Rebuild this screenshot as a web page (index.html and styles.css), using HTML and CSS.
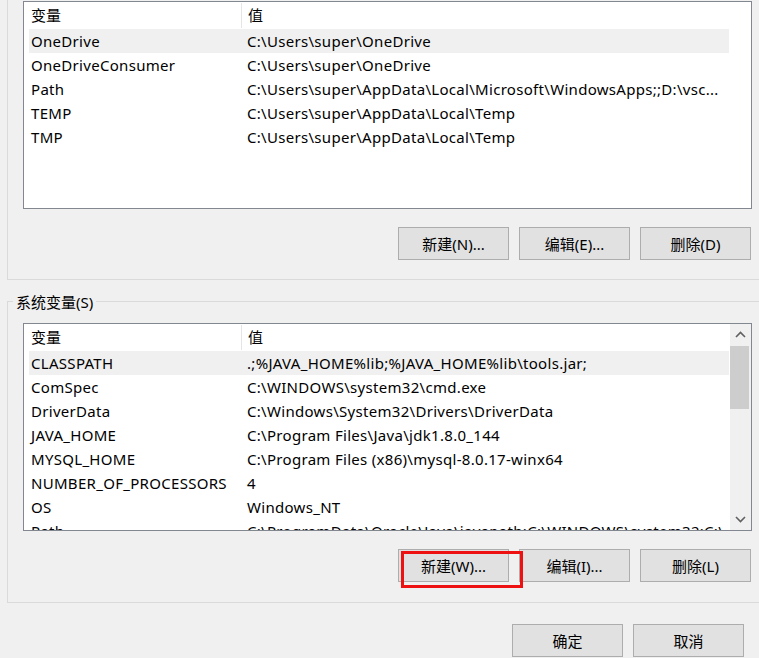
FILE: index.html
```html
<!DOCTYPE html>
<html lang="zh-CN">
<head>
<meta charset="utf-8">
<title>环境变量</title>
<link rel="stylesheet" href="styles.css">
</head>
<body>
<div class="dialog">
  <div class="group group-user">
    <div class="list">
      <div class="list-body">
        <div class="row header"><div class="c1">变量</div><div class="c2">值</div></div>
        <div class="row selected"><div class="c1">OneDrive</div><div class="c2">C:\Users\super\OneDrive</div></div>
        <div class="row"><div class="c1">OneDriveConsumer</div><div class="c2">C:\Users\super\OneDrive</div></div>
        <div class="row"><div class="c1">Path</div><div class="c2">C:\Users\super\AppData\Local\Microsoft\WindowsApps;;D:\vsc...</div></div>
        <div class="row"><div class="c1">TEMP</div><div class="c2">C:\Users\super\AppData\Local\Temp</div></div>
        <div class="row"><div class="c1">TMP</div><div class="c2">C:\Users\super\AppData\Local\Temp</div></div>
      </div>
    </div>
    <div class="buttons">
      <div class="btn">新建(N)...</div>
      <div class="btn">编辑(E)...</div>
      <div class="btn">删除(D)</div>
    </div>
  </div>

  <div class="group group-system">
    <div class="legend">系统变量(S)</div>
    <div class="list">
      <div class="list-body">
        <div class="row header"><div class="c1">变量</div><div class="c2">值</div></div>
        <div class="row selected"><div class="c1">CLASSPATH</div><div class="c2">.;%JAVA_HOME%lib;%JAVA_HOME%lib\tools.jar;</div></div>
        <div class="row"><div class="c1">ComSpec</div><div class="c2">C:\WINDOWS\system32\cmd.exe</div></div>
        <div class="row"><div class="c1">DriverData</div><div class="c2">C:\Windows\System32\Drivers\DriverData</div></div>
        <div class="row"><div class="c1">JAVA_HOME</div><div class="c2">C:\Program Files\Java\jdk1.8.0_144</div></div>
        <div class="row"><div class="c1">MYSQL_HOME</div><div class="c2">C:\Program Files (x86)\mysql-8.0.17-winx64</div></div>
        <div class="row"><div class="c1">NUMBER_OF_PROCESSORS</div><div class="c2">4</div></div>
        <div class="row"><div class="c1">OS</div><div class="c2">Windows_NT</div></div>
        <div class="row"><div class="c1">Path</div><div class="c2">C:\ProgramData\Oracle\Java\javapath;C:\WINDOWS\system32;C:\...</div></div>
      </div>
      <div class="scrollbar">
        <div class="sb-arrow">
          <svg width="11" height="7" viewBox="0 0 11 7"><path d="M1 6 L5.5 1.5 L10 6" fill="none" stroke="#606060" stroke-width="1.6"/></svg>
        </div>
        <div class="sb-thumb"></div>
        <div class="sb-track"></div>
        <div class="sb-arrow">
          <svg width="11" height="7" viewBox="0 0 11 7"><path d="M1 1 L5.5 5.5 L10 1" fill="none" stroke="#606060" stroke-width="1.6"/></svg>
        </div>
      </div>
    </div>
    <div class="buttons">
      <div class="btn-wrap">
        <div class="btn">新建(W)...</div>
        <span class="highlight"></span>
      </div>
      <div class="btn">编辑(I)...</div>
      <div class="btn">删除(L)</div>
    </div>
  </div>

  <div class="buttons footer">
    <div class="btn">确定</div>
    <div class="btn">取消</div>
  </div>
</div>
</body>
</html>
```

FILE: styles.css
```css
html, body {
  margin: 0;
  padding: 0;
  background: #f0f0f0;
  overflow: hidden;
}

body {
  width: 759px;
  height: 658px;
  font-family: "Noto Sans", "Noto Sans CJK SC", sans-serif;
  font-size: 15px;
  color: #000;
}

.dialog {
  width: 759px;
}

.group {
  margin-left: 7px;
  margin-right: -20px;
  border-left: 1px solid #dadada;
  border-bottom: 1px solid #dadada;
  padding-left: 15px;
}

.group-user {
  padding-top: 1px;
  padding-bottom: 19px;
}

.group-system {
  margin-top: 21px;
  border-top: 1px solid #dadada;
  padding-bottom: 20px;
}

.legend {
  margin-top: -10px;
  margin-left: -10px;
  padding: 0 3px;
  width: max-content;
  height: 20px;
  line-height: 20px;
  background: #f0f0f0;
}

.group-system .list {
  margin-top: 11px;
}

.list {
  box-sizing: border-box;
  width: 729px;
  height: 208px;
  border: 1px solid #828790;
  background: #fff;
  display: flex;
  overflow: hidden;
}

.list-body {
  margin-left: 5px;
  width: 700px;
  flex: none;
}

.row {
  display: grid;
  grid-template-columns: 212px 488px;
  height: 24px;
  line-height: 24px;
  white-space: nowrap;
  letter-spacing: 0.3px;
}

.row.header {
  height: 27px;
  line-height: 27px;
  letter-spacing: 0;
}

.row.selected {
  background: #f0f0f0;
}

.c1 {
  padding-left: 2px;
  overflow: hidden;
}

.c2 {
  padding-left: 6px;
  overflow: hidden;
}

.header .c2 {
  border-left: 1px solid #e5e5e5;
  height: 25px;
  margin-top: 1px;
  line-height: 25px;
}

.scrollbar {
  margin-left: auto;
  width: 21px;
  flex: none;
  background: #f0f0f0;
  display: flex;
  flex-direction: column;
}

.sb-arrow {
  height: 21px;
  display: flex;
  align-items: center;
  justify-content: center;
  flex: none;
}

.sb-thumb {
  height: 63px;
  margin: 1px 2px 0 0;
  background: #cdcdcd;
  flex: none;
}

.sb-track {
  flex: 1;
}

.buttons {
  width: 728px;
  margin-top: 18px;
  display: flex;
  justify-content: flex-end;
  gap: 10px;
}

.btn {
  box-sizing: border-box;
  width: 111px;
  height: 33px;
  border: 1px solid #adadad;
  background: #e1e1e1;
  display: flex;
  align-items: center;
  justify-content: center;
  line-height: 20px;
}

.btn-wrap {
  position: relative;
}

.highlight {
  position: absolute;
  left: 3px;
  top: 2px;
  width: 122px;
  height: 37px;
  box-sizing: border-box;
  border: 3px solid #ee1111;
}

.footer {
  width: 744px;
  margin-top: 21px;
}
```
